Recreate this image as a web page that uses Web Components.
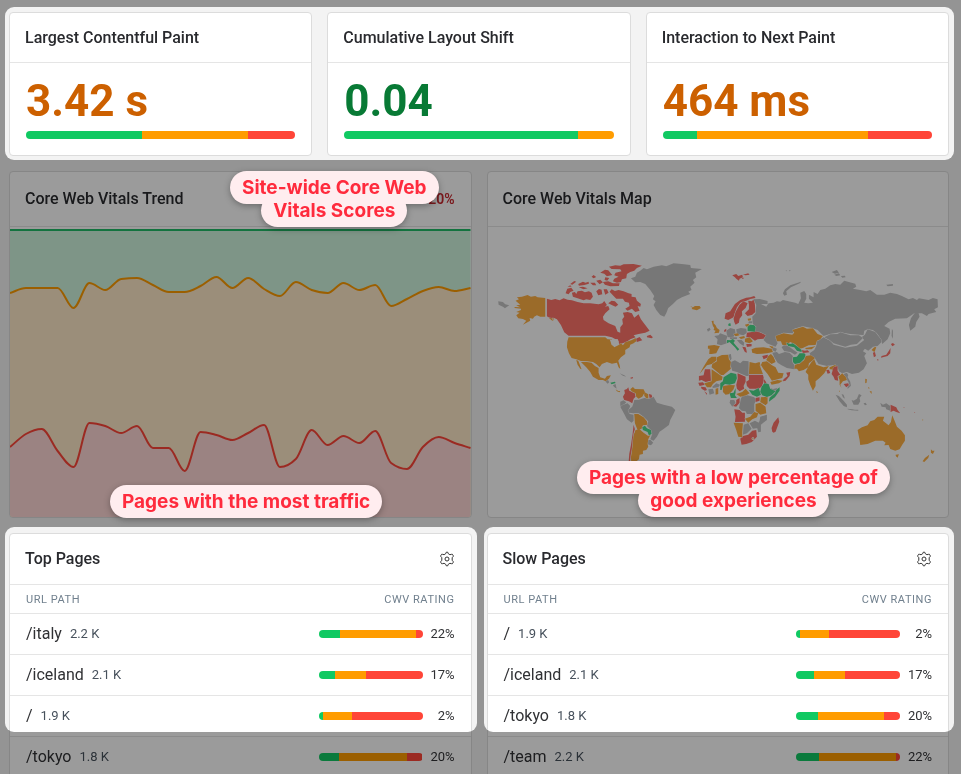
<!DOCTYPE html>
<html lang="en">
<head>
<meta charset="utf-8">
<title>Core Web Vitals</title>
<style>
  html, body { margin: 0; }
  body { background: #f3f3f3; color: #292a2e; font-family: Roboto, "Liberation Sans", sans-serif; overflow: hidden; }
</style>
</head>
<body>
<cwv-dashboard></cwv-dashboard>

<template id="map-art">
<svg viewBox="-6 -69 1380 870" preserveAspectRatio="xMidYMid meet" role="img" aria-label="World map of Core Web Vitals ratings">
  <g class="gray">
    <path d="M24,154 38,156 45,163 57,166 44,175 38,170 25,164Z"/>
    <path d="M388,370l14,6 6,4-10-3ZM345,394l8-5 4,8-5,4ZM368,406l8-4 3,14-8-6Z"/>
    <path d="M390,455l10-4 8,6-10,12-8-2Z"/>
    <path d="M390,470 400,464 412,460 420,468 414,482 418,492 430,494 430,512 424,518 410,508 402,492Z"/>
    <path d="M430,458 432,450 446,449 462,444 476,446 490,440 500,458 520,464 545,470 555,480 548,495 540,510 536,525 520,537 508,545 500,560 490,572 480,568 486,552 482,540 470,528 474,514 460,500 446,490 430,490 416,488 414,480 426,470Z"/>
    <path d="M473,570l8,0 8,8-7,8-10-3Z"/>
  </g>
  <g class="red">
    <path d="M170,146 183,150 195,147 208,151 220,145 232,149 245,151 262,156 280,160 300,160 325,163 336,160 342,153 350,165 344,170 354,168 358,178 345,190 338,200 340,210 355,220 375,228 382,245 390,248 390,232 398,222 396,208 402,200 398,188 412,186 425,190 432,203 445,193 452,208 465,225 478,242 465,248 445,252 430,256 436,262 420,268 410,275 388,283 380,270 365,262 345,257 235,257 222,247 212,225 200,208 190,203 185,208 170,199Z"/>
    <path d="M245,128 254,126 258,132 262,124 275,122 284,127 296,124 304,128 308,140 300,150 288,148 280,151 262,145 248,140ZM226,130 231,116 243,113 250,122 240,126 235,133Z"/>
    <path d="M358,125 364,118 374,123 385,120 400,124 415,130 424,132 424,140 436,142 440,152 452,162 450,170 442,168 448,182 435,186 425,176 412,182 405,176 418,168 416,158 404,155 398,146 378,146 370,138Z"/>
    <path d="M318,124l8-7 8,2 2,14-12,3ZM340,118l10,0 5,10-10,6ZM338,96l16-2 14,6 20,0-2,8-26,1-16-5ZM240,102l12-9 6,2-12,9ZM264,102l14-7 8,3 9-3 1,6-14,4-16,2ZM304,80l6-5 8,6-8,4ZM330,68l14-9 10,2 12,14-16,4-8-8ZM318,92l12-3 8,8-10,6ZM345,82l12,2-6,8-8-2ZM300,98l14,0 4,8-10,0ZM266,112l12-2 14,5-12,3ZM232,110l8-4 4,4Z"/>
    <path d="M356,50 375,46 390,47 400,43 430,42 455,47 440,54 432,62 420,66 410,72 408,85 395,88 392,96 380,98 368,94 372,86 385,80 372,76 376,68 394,64 390,58 364,57Z"/>
    <path d="M354,160l10-8 10,2 10,10-8,6-10-4ZM470,258l10-4 8,8-4,3-14-3ZM434,268l14-7 8,10-16,5Z"/>
    <path d="M420,383l8-2 0,4-6,1ZM402,420 410,417 414,412 417,422 434,430 436,440 430,446 426,460 416,454 402,450 398,440 404,430ZM476,432l8,2 2,8-8,2Z"/>
  </g>
  <g class="amber">
    <path d="M73,171 90,172 78,166 90,164 76,152 86,148 80,142 95,140 112,135 122,140 135,138 142,142 165,144 165,200 150,200 140,196 132,200 128,206 118,204 120,212 98,224 108,212 98,207 84,205 78,196 88,188 78,186 92,180 92,176 73,174Z"/>
    <path d="M176,204l8,1 6,8-6-2ZM186,204l6,2-1,4Z"/>
    <path d="M235,262 345,262 352,268 364,268 366,284 372,292 384,286 392,280 398,286 405,277 425,270 436,264 438,274 430,280 420,284 418,292 405,300 405,312 392,322 384,332 388,345 390,357 385,352 380,338 365,341 350,336 335,342 328,352 318,342 308,336 290,334 272,333 258,328 244,324 236,310 230,292 231,275Z"/>
    <path d="M272,336 290,336 304,338 314,348 325,354 325,368 330,382 344,386 350,378 362,376 356,386 346,394 338,390 325,390 308,380 300,366 288,352ZM258,330l6,2 10,26-4-2-8-12Z"/>
    <path d="M376,418l8,5 6,0-2,4-8-3ZM420,418 428,411 434,417 460,418 464,426 456,440 445,446 438,440 436,430 424,424ZM462,426l12,7 0,12-6,0-6-8Z"/>
    <path d="M432,492 444,492 460,502 470,514 472,524 458,526 454,536 442,540 434,520ZM436,540 448,538 460,548 474,558 482,552 474,568 472,582 474,590 468,600 458,602 458,612 448,614 446,628 436,636 440,648 424,656 422,620 426,590 428,560Z"/>
  </g>
  <path class="green" d="M360,398l14-3 2,4-12,4ZM456,532l8-5 6,8 12,5 2,12-8,4-4-10-14-6Z"/>
  <path class="red thin" d="M430,524l4,14-4,12-3,20-2,24-4,24-2,22-4,0 2-28 5-26 5-34Z"/>
  <path class="sea" d="M358,268l10,3 1,16-5-2-3-10ZM372,268l10-1 4,8-2,9-6-5Z"/>

  <g transform="translate(450 0)">
    <g class="gray">
      <path d="M-28,85 -15,80 -10,68 0,62 10,54 20,58 40,50 65,46 78,49 100,40 125,42 150,45 152,54 185,57 165,68 168,82 158,90 163,98 150,110 154,120 144,125 150,132 125,142 110,150 98,162 84,174 78,190 72,200 60,195 48,180 40,165 46,154 38,148 42,138 30,120 15,102 0,96 -15,97Z"/>
      <path d="M200,238l8-5 3,6-8,6ZM222,258 235,256 240,250 262,258 258,270 260,280 242,286 230,282 232,268ZM258,242 270,234 284,238 286,250 280,260 264,262 260,254ZM288,238l14-4 16,2 2,12-10,8-20-4ZM268,262h22v5h-20ZM290,270l14,0 8,8-2,10-12-8ZM326,214l12,0-2,6-12,0Z"/>
      <path d="M396,290l14,6-4,10-10-6ZM264,314l8-2 2,14-4,6Z"/>
      <path d="M272,336 284,331 300,340 308,332 325,334 326,378 318,378 290,366 276,362 271,345Z"/>
      <path d="M204,418 218,416 222,430 208,434ZM216,410l12-10 12,4-6,8-16,2ZM392,414l6,3 14-3-4,8-12,0ZM270,450l12,0 4,8-10,12-8-12Z"/>
      <path d="M302,446 306,438 322,436 342,442 348,450 342,462 342,480 344,494 330,492 320,492 316,484 304,482 296,474Z"/>
      <path d="M360,500 380,494 380,510 362,524 362,545 354,547 350,530 358,512ZM310,524 324,520 334,536 320,550 308,554ZM328,520 344,512 356,518 352,534 338,536Z"/>
    </g>
    <g class="red">
      <path d="M276,76l12-4 6,6 12-4 2,8-10,4-2,6-8-6-4-4ZM308,74l16-4 4,4-12,2ZM304,84l8-1-4,4Z"/>
      <path d="M253,206 256,190 270,184 284,162 300,150 318,143 330,142 342,138 346,144 330,147 318,152 300,158 290,172 284,188 280,202 264,210Z"/>
      <path d="M280,206 286,186 298,164 310,154 322,160 316,174 305,184 306,196 298,206 296,218 286,224 282,216Z"/>
      <path d="M324,152 334,154 342,148 344,165 346,185 336,194 322,198 314,190 326,178 326,164Z"/>
      <path d="M252,240l6-4 0,8-6,2ZM320,248 335,246 350,242 362,248 379,256 370,266 352,268 344,272 330,262 318,262ZM318,282l16,0 0,7-14,2ZM306,290l10,2 2,6 2,10-6-2ZM366,318l16-4 2,8-14,6Z"/>
      <path d="M176,378 190,376 194,358 210,358 212,392 196,396 184,390 176,392ZM174,398l14-1 6,7-16,4ZM182,410l14,2 4,8-6,2-10-6ZM192,424l8,6 0,5Z"/>
      <path d="M292,370 316,380 316,395 310,408 312,416 298,424 290,416 288,405 292,388ZM326,374 368,374 372,390 364,410 355,416 328,416 320,408 318,395 326,390ZM346,444l12-2 0,10-12,4ZM288,450 298,444 298,458 288,470 278,468 288,460Z"/>
      <path d="M282,478 298,480 306,488 314,488 314,515 284,516 286,500ZM300,566 308,558 324,554 336,542 348,540 350,560 335,576 318,582 304,584ZM396,545 394,534 400,518 414,502 417,515 406,545 400,548ZM370,386l6,8 4,8-8-2Z"/>
      <path d="M430,388l12-10-4-10 12-2-2,12-12,14-8,2Z"/>
    </g>
    <g class="amber">
      <path d="M150,168l6,5 8-5 14,0 4,6-12,7-16-4 4-5ZM214,213l6-1 0,8 6,6 4,8 8,6-2,8-14,2 4-8-6-2 2-6-4-6Z"/>
      <path d="M203,287 222,285 239,289 234,298 228,310 214,312 207,312 208,296 203,296ZM280,252l12-2 6,6-12,3ZM296,262l16-4 2,6-12,3ZM314,266l14-4 10,12-10,6-14-4ZM322,206l10-1 0,6-8,1ZM314,224l10-3 6,6-12,3Z"/>
      <path d="M334,298 346,293 370,292 394,296 398,306 380,310 366,311 350,312 336,308ZM386,287l14,3-4,6Z"/>
      <path d="M204,328 214,320 228,320 230,330 215,342 200,346 186,362 178,372 190,350Z"/>
      <path d="M230,322 245,315 264,314 266,328 272,336 270,350 272,356 250,375 242,375 214,352 216,342 230,334Z"/>
      <path d="M328,336 345,340 358,336 362,350 357,342 368,372 326,372ZM214,358 247,380 245,390 228,394 218,402 212,412 200,412 192,400 214,394ZM248,408 268,405 284,406 280,418 268,432 256,434 248,426ZM226,416l8-2 0,18-8,2Z"/>
      <path d="M288,432 306,426 316,416 328,430 318,436 300,440ZM362,442 382,440 382,460 376,466 360,456ZM346,462 360,458 376,470 378,490 360,494 346,482ZM314,506 330,500 342,486 354,490 350,502 336,508 324,518ZM280,518 308,520 306,545 306,562 294,560 288,540Z"/>
      <path d="M362,345 366,336 380,334 394,345 406,352 414,368 430,370 426,384 412,388 395,392 382,372 370,358ZM390,396 412,390 428,392 416,400 394,404ZM378,330 384,318 392,312 400,320 406,336 394,342Z"/>
    </g>
    <g class="green">
      <path d="M264,222l6-3 2,8-7,1ZM322,230 330,224 344,226 349,238 344,245 322,243ZM260,270 270,271 278,267 284,272 280,278 288,288 297,298 292,302 284,292 274,282 268,276 260,280Z"/>
      <path d="M250,382 272,368 288,372 290,385 284,400 268,404 254,402 248,408 244,420 240,420 240,400 248,394ZM268,430 280,428 286,414 286,428 284,436 290,444 272,444ZM326,420 340,422 355,414 362,434 350,440 336,434ZM364,410 372,400 385,402 390,416 406,424 394,436 380,441 366,436 360,425ZM386,455 388,443 404,430 408,420 418,412 418,422 404,442Z"/>
    </g>
    <circle class="sea" cx="338" cy="566" r="4"/>
    <circle class="amber" cx="338" cy="566" r="2"/>
  </g>

  <g transform="translate(870 0)">
    <g class="gray">
      <path d="M-82,222 -84,200 -74,190 -72,165 -80,148 -62,147 -38,153 -38,162 -58,162 -42,170 -35,160 -20,158 -10,154 0,155 8,150 25,154 45,158 54,162 62,145 60,128 72,123 78,132 78,146 72,158 84,160 98,158 86,146 86,134 100,142 100,126 112,132 120,120 135,116 150,106 165,102 180,104 192,92 225,101 228,110 218,116 240,120 258,124 270,120 290,134 312,134 330,128 350,132 365,138 385,148 398,144 410,150 416,145 445,150 458,144 472,148 473,172 462,178 468,186 445,192 440,198 425,190 415,190 418,200 408,216 405,230 390,242 386,225 392,205 404,188 380,205 345,206 325,216 312,228 328,236 330,250 322,268 306,282 302,268 290,250 278,240 262,238 252,242 250,255 235,254 210,252 180,247 150,252 130,258 112,240 98,235 68,229 40,237 38,250 10,248 -8,256 -14,264 -8,280 -14,290 -40,280 -50,270 -42,255 -60,246 -75,243 -72,230Z"/>
      <path d="M335,236l3,6 0,24-4-8ZM8,130 14,118 30,106 62,95 60,99 32,112 18,124 20,134 12,137ZM154,66l16-6 6,8-12,3ZM162,74l14-4 4,6-12,2ZM182,78l12-1 2,5-10,1ZM318,104l20-2 0,5-16,2ZM16,62l4-1-1,3ZM26,60l6,2-4,2Z"/>
      <path d="M4,292 12,284 24,288 40,300 52,308 44,314 30,306 12,304Z"/>
      <path d="M-24,308 -10,306 -4,312 14,306 28,308 38,318 36,335 44,348 42,358 20,354 4,346 -8,338 -18,322Z"/>
      <path d="M88,310 102,300 108,288 110,274 130,262 150,272 160,284 195,293 230,287 252,270 244,262 254,254 262,238 285,246 302,268 304,276 292,288 278,290 264,302 254,296 248,304 258,310 252,318 260,340 250,358 236,368 215,372 200,366 186,370 176,364 172,350 160,345 140,348 115,342 104,325 92,320Z"/>
      <path d="M132,262 150,253 172,252 180,247 210,256 236,256 248,264 230,282 212,284 195,290 160,280 148,270Z"/>
      <path d="M190,372l10-4 4,8-2,5 8,14 2,12-10,10 0-6 6-6-4-10-8-12ZM166,434 176,438 190,452 200,464 200,472 190,468 178,454ZM184,432l6,2 4,12-6-4ZM202,476l14,2 8,1 10,0 0,3-20-1-12-3ZM214,450l6,2 10-6 6-14 8,4-6,8 2,10-6,10-14,0ZM250,460l6-2 4,6-6,2ZM300,458l8,6 10-4 12,8 0,14-12-4-2-6-12-2Z"/>
    </g>
    <g class="amber">
      <path d="M-14,258 10,250 36,254 42,248 36,240 68,230 80,236 98,235 112,252 128,258 120,268 110,272 106,285 85,286 68,294 58,296 44,282 30,276 16,286 6,284 2,274 -10,274Z"/>
      <path d="M74,294l24-4 8-2-12,10-16,0ZM44,344 60,340 72,330 76,318 92,316 104,324 96,332 86,340 84,352 70,360 56,364 50,356 42,356ZM80,358 92,338 102,328 108,344 130,352 146,348 138,360 132,370 118,384 106,394 106,408 98,422 90,405 84,388 84,374 76,366ZM148,352l18-8 0,8-8,10-4-4-6,0ZM108,422l5,5-3,3Z"/>
      <path d="M274,300l8-8 6-1-5,16ZM174,380 186,370 196,380 200,390 188,394 180,404 184,414 178,404 178,390ZM255,386l5,2-1,10-4,2ZM263,410l5,4-2,3ZM268,424l6,0 0,8ZM176,420l3,5-2,1ZM426,508l3,1-1,4Z"/>
      <path d="M232,540 245,532 262,526 270,514 282,510 292,500 312,500 308,512 325,526 332,516 336,496 342,510 346,520 350,530 364,542 374,556 374,572 366,584 358,598 345,602 330,597 325,585 312,586 316,578 308,572 285,572 262,582 240,585 238,570ZM346,614l10-1-4,10-5-4ZM452,598l4,4 7,0-5,10-6-4ZM447,614 444,624 432,636 427,634 434,624Z"/>
    </g>
    <g class="red">
      <path d="M64,300l10,2 8-1 6,6-20,2ZM138,360l8-1 4,10-8,2ZM160,352 172,348 172,362 180,374 172,378 174,392 164,390 160,380 154,372ZM190,402l14-2 2,6-8,6ZM278,308l6-2 3,12-6,4ZM332,282l6-3 6,5-8,5ZM331,294 330,310 322,318 302,323 304,318 318,314 326,302ZM290,326l5,3-2,4ZM331,464 348,472 352,480 360,490 348,486 340,482 331,486ZM370,471l3,1-2,2ZM402,486l3,1-2,2Z"/>
    </g>
    <path class="green" d="M18,278 30,282 38,280 52,290 64,300 64,306 50,302 42,292 24,288ZM38,322 50,320 58,310 72,310 76,314 72,326 60,338 44,342 38,336Z"/>
  </g>
</svg>
</template>

<script>
const define = (name, html, setup) => customElements.define(name, class extends HTMLElement {
  connectedCallback() {
    if (this.shadowRoot) return;
    const root = this.attachShadow({ mode: "open" });
    root.innerHTML = typeof html === "function" ? html(this) : html;
    if (setup) setup(this, root);
  }
});

define("cwv-card", `
<style>
  :host { display: block; box-sizing: border-box; min-width: 0; background: #fff; border: 1px solid #dcdcdc; border-radius: 4px; overflow: hidden; }
  header { display: flex; align-items: center; justify-content: space-between; box-sizing: border-box; height: var(--header, 50px); padding: 0 16px 0 15px; border-bottom: 1px solid #e5e5e5; }
  h2 { margin: 0; font-size: 16px; line-height: 20px; font-weight: 500; }
</style>
<header><h2><slot name="title"></slot></h2><slot name="action"></slot></header>
<slot></slot>`);

define("cwv-bar", el => {
  const [a, b, c] = el.getAttribute("parts").split(" ");
  return `<style>
  :host { display: flex; height: 8px; border-radius: 4px; overflow: hidden; }
  span:nth-of-type(1) { flex: ${a} 0 0; background: #10c962; }
  span:nth-of-type(2) { flex: ${b} 0 0; background: #ff9c00; }
  span:nth-of-type(3) { flex: ${c} 0 0; background: #ff4538; }
</style><span></span><span></span><span></span>`;
});

define("cwv-metric", el => `
<style>
  :host { display: flex; flex-direction: column; gap: 6px; padding: 14px 16px 16px; }
  strong { font-size: 44px; line-height: 48px; font-weight: 700; color: ${el.getAttribute("tone") === "good" ? "#087a35" : "#cc6000"}; }
</style>
<strong>${el.getAttribute("value")}</strong>
<cwv-bar parts="${el.getAttribute("parts")}"></cwv-bar>`);

const ratedPoints = {
  amber: [293, 288, 288, 288, 308, 283, 290, 279, 278, 285, 292, 292, 286, 277, 288, 278, 289, 296, 282, 290, 293, 283, 290, 285, 306, 299, 291, 287, 291, 288],
  red: [447, 434, 429, 451, 467, 423, 426, 433, 426, 448, 448, 471, 432, 435, 440, 433, 425, 467, 459, 430, 445, 436, 443, 431, 463, 469, 447, 437, 443, 448]
};

// Monotone cubic curve through evenly spaced values, with y measured from the chart top.
function monotone(values) {
  const h = 461 / (values.length - 1);
  const y = values.map(v => v - 227);
  const s = y.slice(1).map((v, i) => (v - y[i]) / h);
  const m = y.map((_, i) => {
    if (i === 0) return s[0];
    if (i === y.length - 1) return s[i - 1];
    const a = s[i - 1], b = s[i];
    return (Math.sign(a) + Math.sign(b)) * Math.min(Math.abs(a), Math.abs(b), Math.abs(a + b) / 4);
  });
  let d = `M0,${y[0]}`;
  for (let i = 1; i < y.length; i++) {
    const x0 = (i - 1) * h, x1 = i * h;
    d += `C${x0 + h / 3},${y[i - 1] + m[i - 1] * h / 3} ${x1 - h / 3},${y[i] - m[i] * h / 3} ${x1},${y[i]}`;
  }
  return d;
}

define("cwv-trend", () => {
  const amber = monotone(ratedPoints.amber), red = monotone(ratedPoints.red);
  return `<style>
  :host { display: block; }
  svg { display: block; width: 100%; height: 290px; }
  .line { fill: none; stroke-width: 2; vector-effect: non-scaling-stroke; }
</style>
<svg viewBox="0 0 461 290" preserveAspectRatio="none" role="img" aria-label="Core Web Vitals trend">
  <rect y="3" width="461" height="287" fill="#d0f5de"/>
  <path d="${amber}V290H0Z" fill="#ffe9c9"/>
  <path d="${red}V290H0Z" fill="#ffd8d6"/>
  <path class="line" d="M0,3H461" stroke="#1fbd68"/>
  <path class="line" d="${amber}" stroke="#ff9c00"/>
  <path class="line" d="${red}" stroke="#ff4538"/>
</svg>`;
});

define("cwv-map", `
<style>
  :host { display: block; }
  svg { display: block; width: 100%; height: 290px; }
  path, circle { stroke: #fff; stroke-width: 2; stroke-linejoin: round; paint-order: stroke; }
  .gray { fill: #c4c4c4; } .red { fill: #ff7269; } .amber { fill: #ffb043; } .green { fill: #4bdc8b; }
  .sea { fill: #fff; stroke: none; }
</style>`, (el, root) => root.append(document.getElementById("map-art").content.cloneNode(true)));

define("cwv-settings", el => `
<style>
  :host { display: block; }
  button { display: block; margin: 0; padding: 0; border: 0; background: none; color: #333; }
  svg { display: block; width: 16px; height: 16px; }
</style>
<button type="button" aria-label="${el.getAttribute("label")}">
<svg viewBox="0 0 16 16" fill="none" stroke="currentColor" stroke-width="1" stroke-linejoin="round"><path d="M6.7 2.7 7.3 1.2h1.4l.6 1.5 1.6 1 1.7-.4h.8l.9 1.5-.1.7-1 1.2v2.6l1 1.2.1.7-.9 1.5h-.8l-1.7-.4-1.6 1-.6 1.5H7.3l-.6-1.5-1.6-1-1.7.4h-.8l-.9-1.5.1-.7 1-1.2V6.7l-1-1.2-.1-.7.9-1.5h.8l1.7.4Z"/><circle cx="8" cy="8" r="2"/></svg>
</button>`);

define("cwv-pages", el => {
  const rows = el.getAttribute("rows").split(";").map(r => r.split(","));
  return `<style>
  :host { display: block; }
  table { width: 100%; border-collapse: separate; border-spacing: 0; }
  th { box-sizing: border-box; height: 29px; padding: 2px 16px 0; border-bottom: 1px solid #e5e5e5; color: #71808e; font-size: 11px; line-height: 14px; font-weight: 400; letter-spacing: .05em; text-align: left; }
  th + th { text-align: right; }
  td { height: 40px; padding: 0 16px; border-bottom: 1px solid #e5e5e5; }
  .page, .rating { display: flex; align-items: center; gap: 8px; }
  .rating { justify-content: flex-end; }
  .path { font-size: 16px; line-height: 20px; color: #303134; }
  .views { font-size: 13px; line-height: 20px; color: #47515c; }
  .score { width: 24px; font-size: 13px; line-height: 20px; text-align: right; color: #303134; }
  cwv-bar { width: 104px; }
</style>
<table>
  <thead><tr><th scope="col">URL PATH</th><th scope="col">CWV RATING</th></tr></thead>
  <tbody>${rows.map(([path, views, score, parts]) => `<tr><td><div class="page"><span class="path">${path}</span><span class="views">${views}</span></div></td><td><div class="rating"><cwv-bar parts="${parts}"></cwv-bar><span class="score">${score}</span></div></td></tr>`).join("")}</tbody>
</table>`;
});

// White areas of the multiply layer leave the page beneath them undimmed.
define("tour-dim", `
<style>
  :host { position: absolute; inset: 0; box-sizing: border-box; padding: 7px 7px 0 5px; background: #9b9b9b; mix-blend-mode: multiply; pointer-events: none; }
  .grid { display: grid; grid-template-columns: 472fr 470fr; column-gap: 7px; row-gap: 367px; grid-template-rows: 153px 205px; }
  i { background: #fff; border-radius: 9px; }
  i:first-child { grid-column: 1 / -1; }
</style>
<div class="grid"><i></i><i></i><i></i></div>`);

// Each line has its own pill; the pills lie behind all of the label's text.
define("tour-label", el => `
<style>
  :host { position: absolute; display: flex; flex-direction: column; align-items: center; padding: 5px 12px; white-space: nowrap; filter: drop-shadow(0 2px 3px rgba(0, 0, 0, .3)); font: 700 19px/23px Inter, "Liberation Sans", sans-serif; color: #ff2b3d; }
  span { position: relative; }
  span::before { content: ""; position: absolute; z-index: -1; inset: -5px -12px; border-radius: 17px; background: #ffedef; }
</style>
${el.getAttribute("lines").split("|").map(t => `<span>${t}</span>`).join("")}`);

define("cwv-dashboard", `
<style>
  :host { display: block; position: relative; min-height: 100vh; isolation: isolate; background: #f3f3f3; }
  main { display: flex; flex-direction: column; gap: 15px; padding: 12px 12px 0 9px; }
  .three, .two { display: grid; gap: 15px; grid-template-columns: repeat(3, minmax(0, 1fr)); }
  .two { grid-template-columns: repeat(2, minmax(0, 1fr)); }
  .charts { --header: 55px; }
  .lists { --header: 51px; }
  .change { font-size: 14px; line-height: 20px; font-weight: 600; color: #c9272e; }
  .scores { top: 171px; left: 230px; }
  .traffic { top: 485px; left: 110px; }
  .slow { top: 461px; left: 577px; }
</style>
<main>
  <section class="three">
    <cwv-card><span slot="title">Largest Contentful Paint</span><cwv-metric value="3.42 s" parts="431 394 175"></cwv-metric></cwv-card>
    <cwv-card><span slot="title">Cumulative Layout Shift</span><cwv-metric value="0.04" tone="good" parts="867 133 0"></cwv-metric></cwv-card>
    <cwv-card><span slot="title">Interaction to Next Paint</span><cwv-metric value="464 ms" parts="126 636 238"></cwv-metric></cwv-card>
  </section>
  <section class="two charts">
    <cwv-card><span slot="title">Core Web Vitals Trend</span><span slot="action" class="change">20%</span><cwv-trend></cwv-trend></cwv-card>
    <cwv-card><span slot="title">Core Web Vitals Map</span><cwv-map></cwv-map></cwv-card>
  </section>
  <section class="two lists">
    <cwv-card><span slot="title">Top Pages</span><cwv-settings slot="action" label="Top Pages settings"></cwv-settings>
      <cwv-pages rows="/italy,2.2 K,22%,21 73 6;/iceland,2.1 K,17%,16 30 54;/,1.9 K,2%,4 28 68;/tokyo,1.8 K,20%,20 65 15"></cwv-pages></cwv-card>
    <cwv-card><span slot="title">Slow Pages</span><cwv-settings slot="action" label="Slow Pages settings"></cwv-settings>
      <cwv-pages rows="/,1.9 K,2%,4 28 68;/iceland,2.1 K,17%,17 30 53;/tokyo,1.8 K,20%,21 64 15;/team,2.2 K,22%,22 74 4"></cwv-pages></cwv-card>
  </section>
</main>
<tour-dim></tour-dim>
<tour-label class="scores" lines="Site-wide Core Web|Vitals Scores"></tour-label>
<tour-label class="traffic" lines="Pages with the most traffic"></tour-label>
<tour-label class="slow" lines="Pages with a low percentage of|good experiences"></tour-label>`);
</script>
</body>
</html>
